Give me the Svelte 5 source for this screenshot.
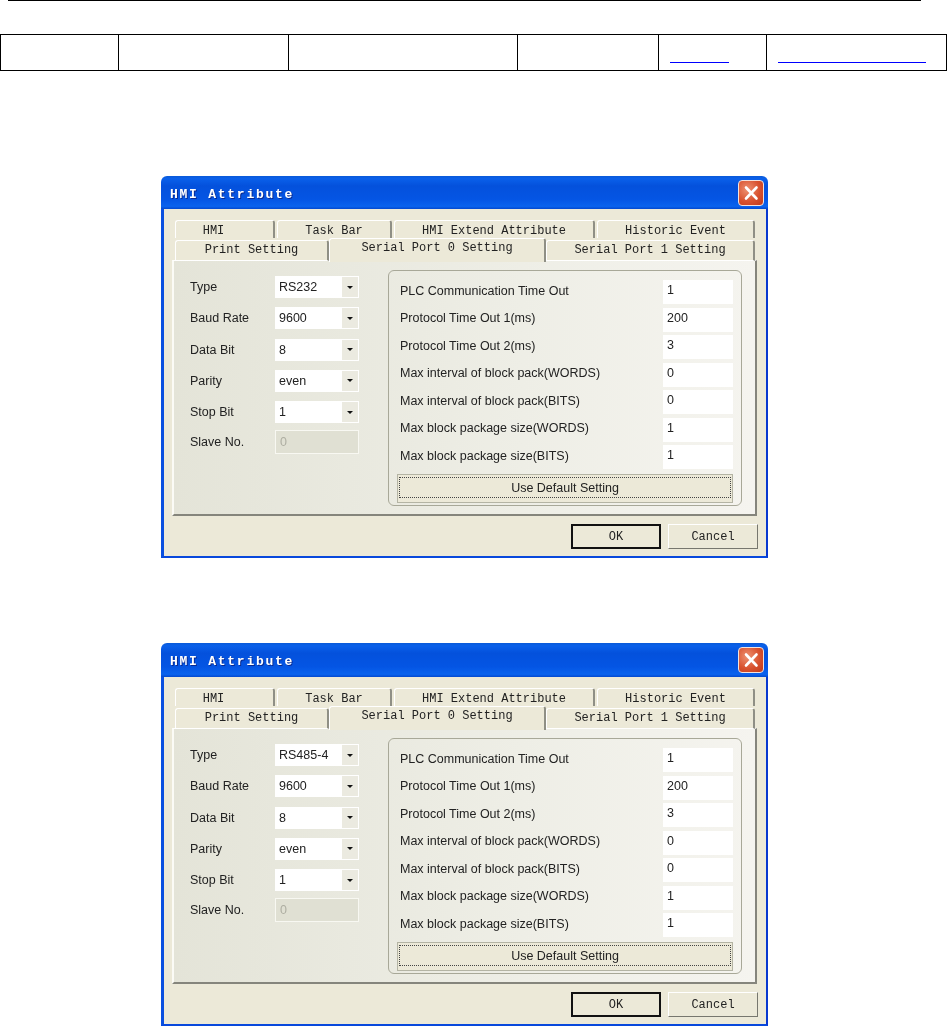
<script>
  const cols = [
    { w: 118 }, { w: 170 }, { w: 229 }, { w: 141 },
    { w: 108, link: 59 }, { w: 180, link: 148 }
  ];
  const topTabs = [
    { t: 'HMI', w: 100, cls: 'hmi' }, { t: 'Task Bar', w: 115, cls: '' },
    { t: 'HMI Extend Attribute', w: 201, cls: '' }, { t: 'Historic Event', w: 158, cls: '' }
  ];
  const params = [
    ['PLC Communication Time Out', '1'],
    ['Protocol Time Out 1(ms)', '200'],
    ['Protocol Time Out 2(ms)', '3'],
    ['Max interval of block pack(WORDS)', '0'],
    ['Max interval of block pack(BITS)', '0'],
    ['Max block package size(WORDS)', '1'],
    ['Max block package size(BITS)', '1']
  ];
  const combos = (type) => [
    ['Type', type], ['Baud Rate', '9600'], ['Data Bit', '8'], ['Parity', 'even'], ['Stop Bit', '1']
  ];
</script>

{#snippet dialog(type, cls)}
  <section class="dialog {cls}">
    <header class="title">
      <span class="title-text">HMI Attribute</span>
      <span class="close" aria-label="Close">
        <svg viewBox="0 0 24 24" width="24" height="24">
          <path d="M7 6.5 L17.5 17.5 M17.5 6.5 L7 17.5" stroke="#fff" stroke-width="2.6" fill="none" stroke-linecap="round"/>
        </svg>
      </span>
    </header>
    <div class="client">
      <div class="tabrow one">
        {#each topTabs as tab}
          <div class="tab {tab.cls}" style="width:{tab.w}px">{tab.t}</div>
        {/each}
      </div>
      <div class="tabrow two">
        <div class="tab" style="width:154px">Print Setting</div>
        <div class="tab active" style="width:217px">Serial Port 0 Setting</div>
        <div class="tab" style="width:209px">Serial Port 1 Setting</div>
      </div>
      <div class="pane">
        <div class="left">
          {#each combos(type) as [label, value]}
            <div class="field">
              <span class="label">{label}</span>
              <div class="combo">
                <span>{value}</span>
                <span class="drop"><i></i></span>
              </div>
            </div>
          {/each}
          <div class="field slave">
            <span class="label">Slave No.</span>
            <div class="disabled">0</div>
          </div>
        </div>
        <div class="group">
          {#each params as [label, value]}
            <div class="param">
              <span class="param-label">{label}</span>
              <div class="value">{value}</div>
            </div>
          {/each}
          <button class="default"><span>Use Default Setting</span></button>
        </div>
      </div>
      <footer class="actions">
        <button class="btn primary">OK</button>
        <button class="btn">Cancel</button>
      </footer>
    </div>
  </section>
{/snippet}

<main class="page">
  <div class="rule"></div>
  <div class="table">
    {#each cols as col}
      <div class="cell" style="width:{col.w}px">
        {#if col.link}<a href="#top" class="link" style="width:{col.link}px" aria-label="link"></a>{/if}
      </div>
    {/each}
  </div>
  <div class="dialogs">
    {@render dialog('RS232', 'first')}
    {@render dialog('RS485-4', 'second')}
  </div>
</main>

<style>
  :global(body) { margin: 0; background: #fff; }
  .page { width: 947px; height: 1027px; overflow: hidden; display: flex; flex-direction: column; }
  .rule { height: 1px; margin: 0 26px 0 8px; background: #000; flex: none; }
  .table { display: flex; flex: none; margin-top: 33px; height: 37px; box-sizing: border-box; border: 1px solid #000; border-right: 0; width: 947px; }
  .cell { box-sizing: border-box; border-right: 1px solid #000; display: flex; align-items: flex-end; padding: 0 0 7px 11px; }
  .link { display: block; height: 1px; background: #0000ff; }
  .dialogs { display: flex; flex-direction: column; gap: 85px; margin: 105px 0 0 161px; }
  .dialog { width: 607px; box-sizing: border-box; display: flex; flex-direction: column; font-family: "Liberation Sans", Arial, sans-serif; font-size: 12.5px; color: #222; filter: blur(0.4px); border-radius: 6px 6px 0 0; overflow: hidden; }
  .title { height: 33px; flex: none; box-sizing: border-box; display: flex; align-items: center; justify-content: space-between; padding: 0 4px 0 9px; background: linear-gradient(180deg, #0a5ad8 0%, #0a60ea 8%, #0451dc 30%, #0455e4 70%, #0a63ee 92%, #0349cf 100%); }
  .second .title { height: 34px; }
  .title-text { font-family: "Liberation Mono", monospace; font-weight: 700; font-size: 13px; letter-spacing: 1.75px; color: #fff; text-shadow: 1px 1px 0 #0a2a90; padding-top: 3px; }
  .close { width: 24px; height: 24px; border-radius: 4px; border: 1px solid #f3e2dc; display: flex; background: radial-gradient(circle at 35% 35%, #ee9272, #d8522f 55%, #c0391a); flex: none; }
  .client { background: #ece9d8; border-left: 3px solid #0a50e0; border-right: 2px solid #0838d0; border-bottom: 2px solid #0848dc; padding: 11px 9px 7px 8px; display: flex; flex-direction: column; }
  .tabrow { display: flex; padding-left: 3px; font-family: "Liberation Mono", monospace; font-size: 12px; color: #222; }
  .tabrow.one { gap: 2px; height: 20px; }
  .tabrow.two { height: 21px; position: relative; z-index: 1; }
  .tab { box-sizing: border-box; height: 100%; display: flex; justify-content: center; align-items: center; background: #ece9d8; border-top: 1px solid #fff; border-left: 1px solid #fff; border-right: 2px solid #8f8f85; border-radius: 3px 3px 0 0; padding-bottom: 1px; }
  .tabrow.one .tab { height: 18px; padding: 3px 0 0; }
  .tabrow.one .tab.hmi { padding-right: 22px; }
  .tabrow.two .tab:not(.active) { border-bottom: 1px solid #fff; }
  .tab.active { height: 24px; margin-top: -2px; padding-bottom: 5px; }
  .pane { height: 256px; box-sizing: border-box; display: flex; align-items: flex-start; padding-top: 9px; border-top: 1px solid #fff; border-left: 2px solid #fbfbf6; border-right: 2px solid #85857c; border-bottom: 2px solid #85857c; background: linear-gradient(90deg, #e4e4d8 0%, #eeeee6 60%, #f5f4ef 100%); margin-top: -1px; }
  .left { width: 214px; flex: none; box-sizing: border-box; padding: 6px 0 0 16px; display: flex; flex-direction: column; gap: 9.25px; }
  .field { display: flex; align-items: center; height: 22px; }
  .label { width: 85px; flex: none; }
  .combo { width: 84px; height: 22px; box-sizing: border-box; background: #fff; display: flex; align-items: center; justify-content: space-between; padding-left: 4px; }
  .drop { width: 16px; height: 20px; margin-right: 1px; background: #ebeae0; display: flex; align-items: center; justify-content: center; }
  .drop i { display: block; width: 0; height: 0; border-left: 3px solid transparent; border-right: 3px solid transparent; border-top: 3px solid #111; }
  .slave { height: 24px; margin-top: -2px; }
  .disabled { width: 84px; height: 24px; box-sizing: border-box; border: 1px solid #f8f8f2; background: #e0e0d3; color: #aeaea2; padding: 4px; }
  .group { width: 354px; height: 236px; flex: none; box-sizing: border-box; border: 1px solid #a8a898; border-radius: 6px; padding: 9px 8px 0; display: flex; flex-direction: column; gap: 3.5px; }
  .param { display: flex; justify-content: space-between; align-items: center; height: 24px; padding-left: 3px; }
  .param-label { margin-bottom: 3px; }
  .value { width: 70px; height: 24px; box-sizing: border-box; background: #fff; padding: 3px 4px; }
  .default { margin-top: 1.5px; height: 29px; background: #ece9d8; border: 0; box-shadow: inset 0 0 0 1px #b4b4a4; padding: 3px 2px 5px; font: inherit; color: inherit; display: flex; }
  .default span { flex: 1; border: 1px dotted #444; display: flex; align-items: center; justify-content: center; }
  .actions { display: flex; justify-content: flex-end; gap: 7px; margin-top: 8px; margin-right: -1px; }
  .btn { width: 90px; height: 25px; box-sizing: border-box; background: #ece9d8; border: 1px solid; border-color: #fff #77776e #77776e #fff; font-family: "Liberation Mono", monospace; font-size: 12px; color: #222; padding: 0; }
  .btn.primary { border: 2px solid #111; }
</style>
